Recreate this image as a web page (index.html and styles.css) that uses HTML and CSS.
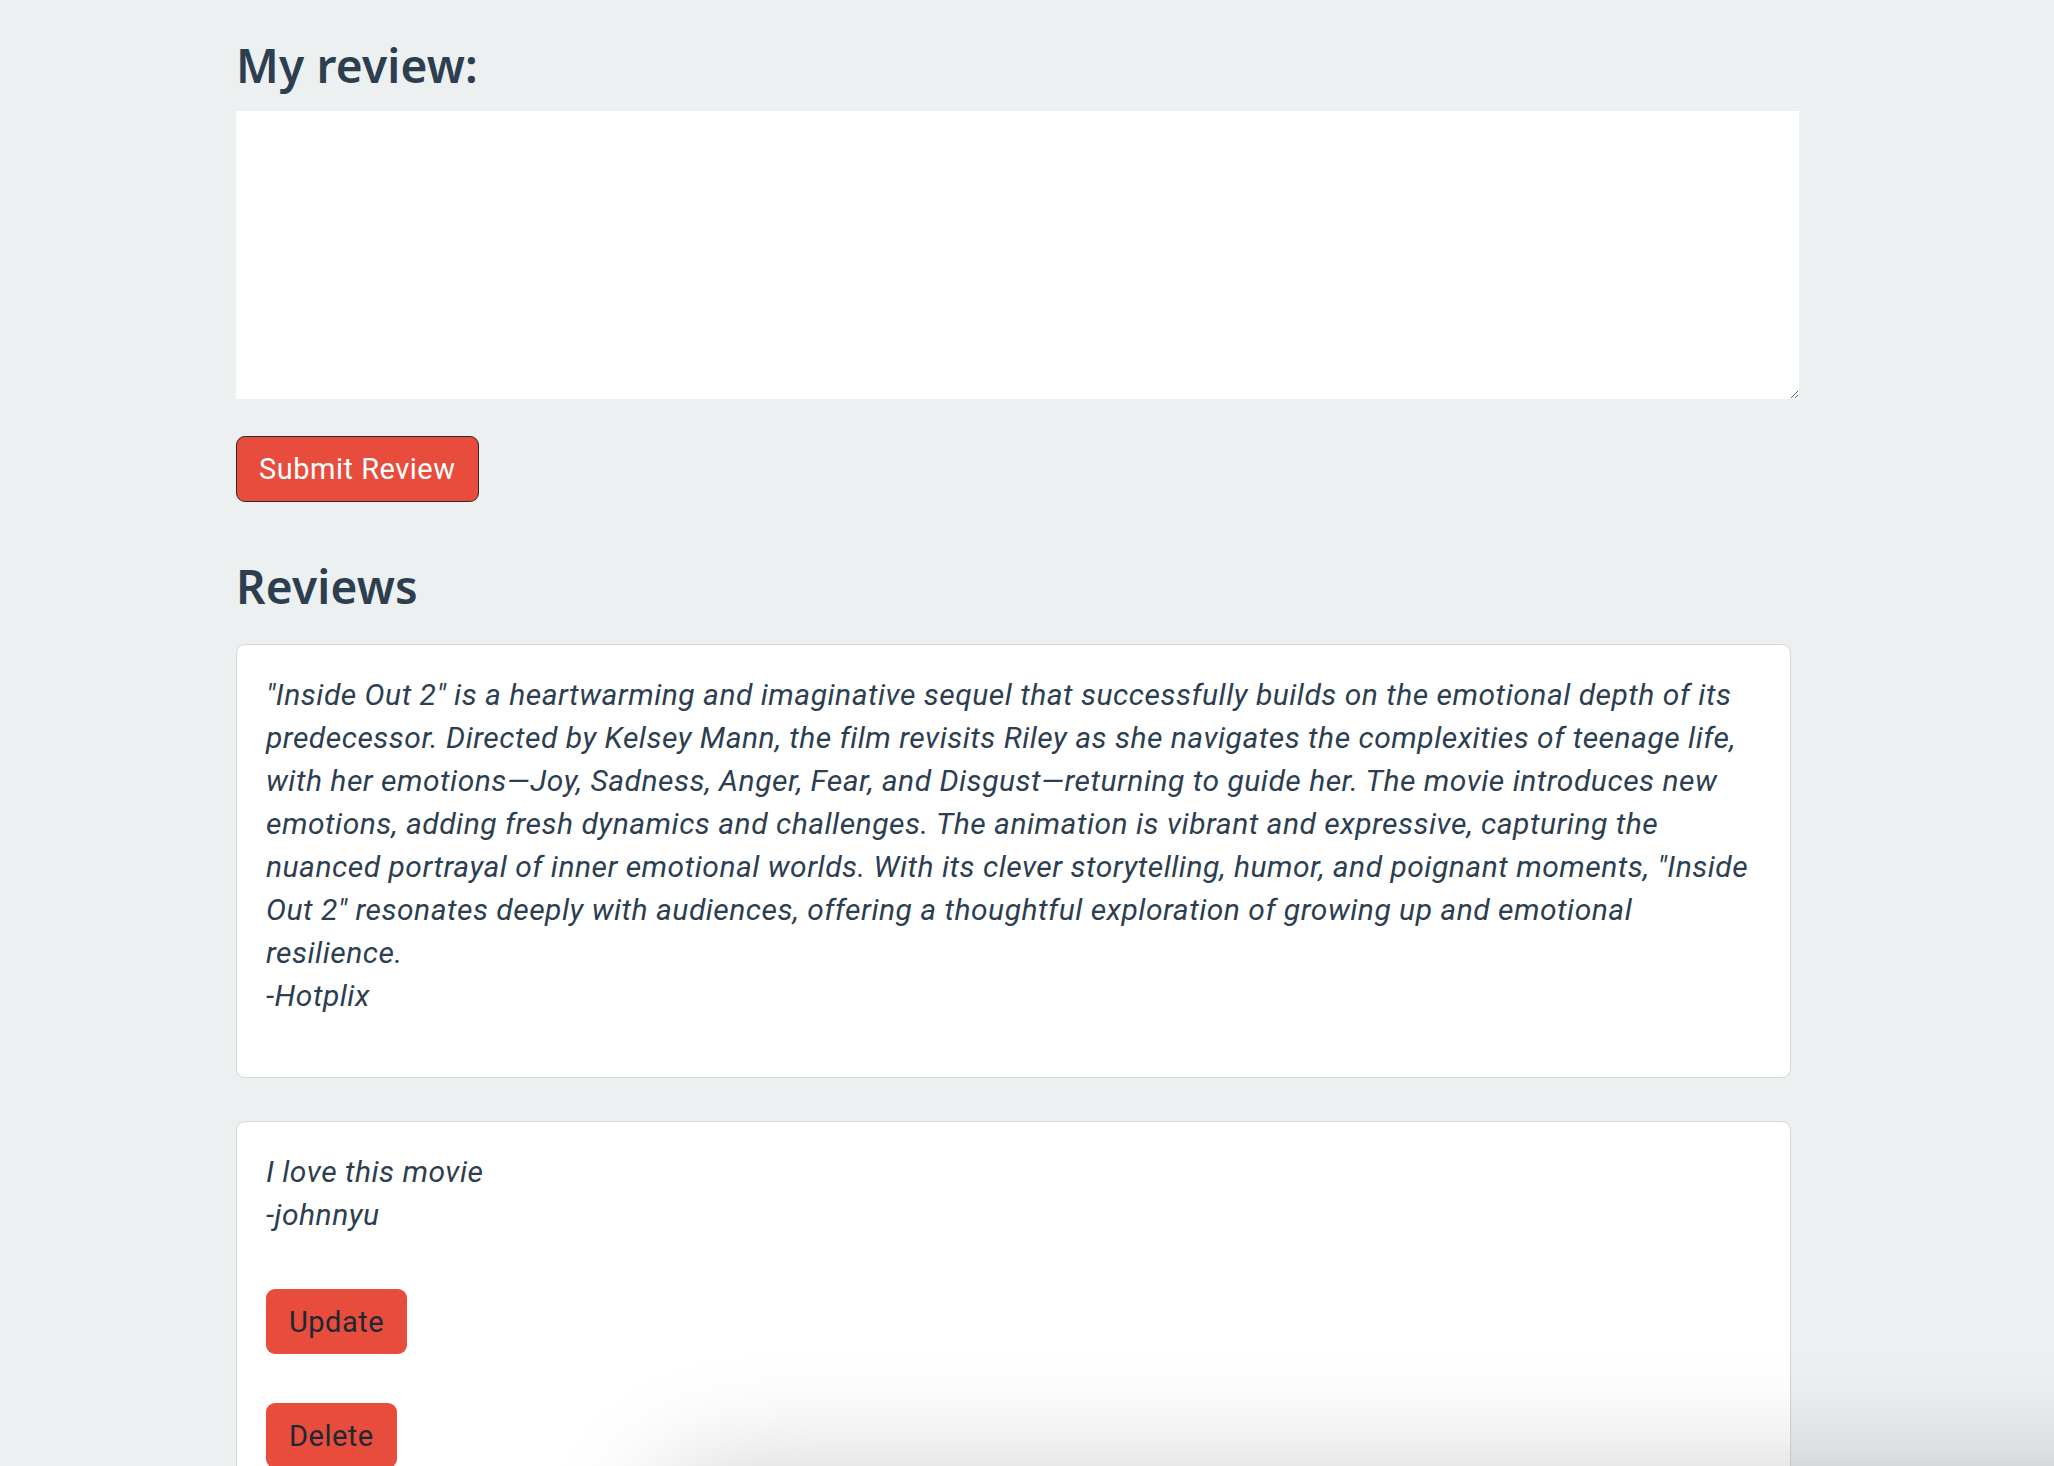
FILE: index.html
```html
<!DOCTYPE html>
<html lang="en">
<head>
<meta charset="utf-8">
<title>Reviews</title>
<link rel="stylesheet" href="styles.css">
</head>
<body>
<main class="page">
  <section class="my-review">
    <h2 class="heading">My review:</h2>
    <textarea class="review-input"></textarea>
    <button class="btn btn-submit">Submit Review</button>
  </section>
  <section class="reviews">
    <h2 class="heading heading-reviews">Reviews</h2>
    <article class="card">
      <p class="review-text">"Inside Out 2" is a heartwarming and imaginative sequel that successfully builds on the emotional depth of its predecessor. Directed by Kelsey Mann, the film revisits Riley as she navigates the complexities of teenage life, with her emotions—Joy, Sadness, Anger, Fear, and Disgust—returning to guide her. The movie introduces new emotions, adding fresh dynamics and challenges. The animation is vibrant and expressive, capturing the nuanced portrayal of inner emotional worlds. With its clever storytelling, humor, and poignant moments, "Inside Out 2" resonates deeply with audiences, offering a thoughtful exploration of growing up and emotional resilience.<br>-Hotplix</p>
    </article>
    <article class="card card-own">
      <p class="review-text">I love this movie<br>-johnnyu</p>
      <div class="actions">
        <button class="btn btn-action">Update</button>
        <button class="btn btn-action">Delete</button>
      </div>
    </article>
  </section>
</main>
<div class="window-shadow"></div>
</body>
</html>
```

FILE: styles.css
```css
html, body {
  margin: 0;
  padding: 0;
  background: #ecf0f1;
  color: #2c3e50;
  font-family: "Roboto", "Liberation Sans", sans-serif;
  overflow: hidden;
  height: 1466px;
}

.page {
  width: 1563px;
  padding: 37px 0 0 236px;
}

.heading {
  margin: 0;
  font-family: "Noto Sans", "DejaVu Sans", sans-serif;
  font-weight: 600;
  font-size: 46px;
  line-height: 56px;
  color: #2c3e50;
  letter-spacing: 0.2px;
}

.my-review {
  display: flex;
  flex-direction: column;
  align-items: flex-start;
}

.review-input {
  display: block;
  margin: 18px 0 0 0;
  width: 1563px;
  height: 288px;
  border: none;
  background: #fff;
  box-sizing: border-box;
  padding: 8px;
  outline: none;
  font-family: "Roboto", sans-serif;
}

.btn {
  font-family: "Roboto", "Liberation Sans", sans-serif;
  font-size: 29px;
  letter-spacing: 0.5px;
  background: #e74c3c;
  border-radius: 9px;
  cursor: pointer;
}

.btn-submit {
  margin-top: 37px;
  height: 66px;
  padding: 0 22px;
  color: #fff;
  border: 1px solid #2c2c2c;
}

.heading-reviews {
  margin-top: 56px;
  margin-bottom: 30px;
}

.card {
  width: 1555px;
  box-sizing: border-box;
  background: #fff;
  border: 1px solid #d5d8da;
  border-radius: 9px;
  padding: 28px 28px 28px 29px;
  margin-bottom: 43px;
}

.review-text {
  margin: 0 0 32px 0;
  font-style: italic;
  font-size: 30px;
  letter-spacing: 0.5px;
  line-height: 43px;
  color: #2c3e50;
}

.card-own .review-text {
  margin-bottom: 53px;
}

.actions {
  display: flex;
  flex-direction: column;
  align-items: flex-start;
  gap: 49px;
}

.btn-action {
  height: 65px;
  padding: 0 23px;
  border: none;
  color: #1e2833;
}

.window-shadow {
  position: fixed;
  left: 670px;
  right: -200px;
  top: 1490px;
  height: 300px;
  border-radius: 70px;
  box-shadow: 0 0 110px 30px rgba(0, 0, 0, 0.17);
  pointer-events: none;
}
```
